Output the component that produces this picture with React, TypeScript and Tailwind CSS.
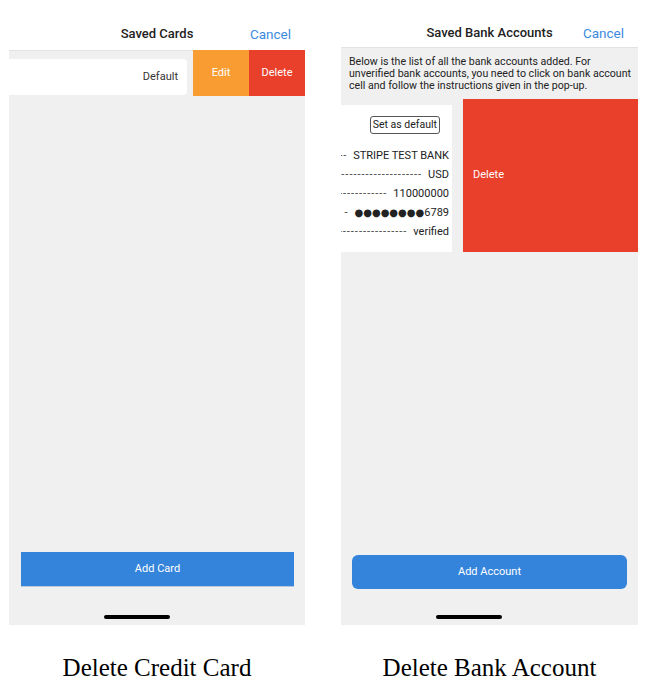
import React from 'react';

const sans = { fontFamily: 'Roboto, "Noto Sans", sans-serif' };

const DASHES = '------------------------------';

const bankRows = [
  { value: 'STRIPE TEST BANK' },
  { value: 'USD' },
  { value: '110000000' },
  { value: '6789', dots: true },
  { value: 'verified' },
];

const HomeBar: React.FC = () => (
  <div className="mt-auto mb-[6px] ml-[95px] h-[4px] w-[66px] rounded-full bg-black" />
);

const SavedCards: React.FC = () => (
  <div className="ml-[9px] flex w-[296px] flex-col">
    <div className="relative flex h-[50px] items-start justify-center pt-[26px]">
      <span className="text-[13px] leading-4 font-medium text-[#222]">Saved Cards</span>
      <span className="absolute right-[14px] top-[25px] text-[13.5px] leading-[18px] text-[#3b8ae0]">Cancel</span>
    </div>
    <div className="flex h-[575px] flex-col border-t border-[#e2e2e2] bg-[#f0f0f0]">
      <div className="flex h-[46px] -mt-px">
        <div className="mt-[9px] flex h-[36px] w-[178px] items-center justify-end rounded-r bg-white pr-[9px] text-[11px] text-[#333]">
          Default
        </div>
        <div className="ml-[6px] flex w-[56px] items-center justify-center bg-[#f99d33] text-[11px] text-white">
          Edit
        </div>
        <div className="flex w-[56px] items-center justify-center bg-[#e9402b] text-[11px] text-white">
          Delete
        </div>
      </div>
      <button className="mt-[456px] ml-[12px] flex h-[34px] w-[273px] items-center justify-center bg-[#3584db] text-[11px] text-white shadow-[0_1px_0_#b9c8dc]">
        Add Card
      </button>
      <HomeBar />
    </div>
    <div className="pt-[31px] text-center text-[25px] leading-6 text-black" style={{ fontFamily: '"Liberation Serif", serif' }}>
      Delete Credit Card
    </div>
  </div>
);

const SavedBankAccounts: React.FC = () => (
  <div className="ml-[36px] flex w-[297px] flex-col">
    <div className="relative flex h-[47px] items-start justify-center pt-[25px]">
      <span className="text-[13px] leading-4 font-medium text-[#222]">Saved Bank Accounts</span>
      <span className="absolute right-[14px] top-[24px] text-[13.5px] leading-[18px] text-[#3b8ae0]">Cancel</span>
    </div>
    <div className="flex h-[578px] flex-col border-t border-[#e2e2e2] bg-[#f0f0f0]">
      <p className="whitespace-nowrap pl-[8px] pt-[8px] text-[10.6px] leading-[12px] text-[#222]">
        Below is the list of all the bank accounts added. For
        <br />
        unverified bank accounts, you need to click on bank account
        <br />
        cell and follow the instructions given in the pop-up.
      </p>
      <div className="mt-[7px] flex h-[153px]">
        <div className="mt-[6px] flex w-[111px] flex-col items-end overflow-hidden bg-white pr-[3px] text-[11px] text-[#222]">
          <div className="mt-[11px] mr-[9px] rounded-[3px] border border-[#555] px-[2px] text-[10.5px] leading-[16px]">
            Set as default
          </div>
          <div className="mt-[15px] flex flex-col items-end gap-[5px]">
            {bankRows.map((row) => (
              <div key={row.value} className="flex h-[14px] items-center whitespace-nowrap leading-[14px]">
                <span className="mr-[6px] tracking-[1px] text-[#444]">{row.dots ? '-' : DASHES}</span>
                {row.dots && (
                  <span className="text-[10px]" style={{ fontFamily: '"DejaVu Sans", sans-serif' }}>
                    ●●●●●●●●
                  </span>
                )}
                <span>{row.value}</span>
              </div>
            ))}
          </div>
        </div>
        <div className="ml-[11px] flex flex-1 items-center bg-[#e9402b] pl-[10px] text-[11px] text-white">Delete</div>
      </div>
      <button className="mt-[303px] ml-[11px] flex h-[34px] w-[275px] items-center justify-center rounded-md bg-[#3584db] text-[11px] text-white">
        Add Account
      </button>
      <HomeBar />
    </div>
    <div className="pt-[31px] text-center text-[25px] leading-6 text-black" style={{ fontFamily: '"Liberation Serif", serif' }}>
      Delete Bank Account
    </div>
  </div>
);

export default function App() {
  return (
    <div className="flex h-[693px] w-[647px] overflow-hidden bg-white" style={sans}>
      <SavedCards />
      <SavedBankAccounts />
    </div>
  );
}
